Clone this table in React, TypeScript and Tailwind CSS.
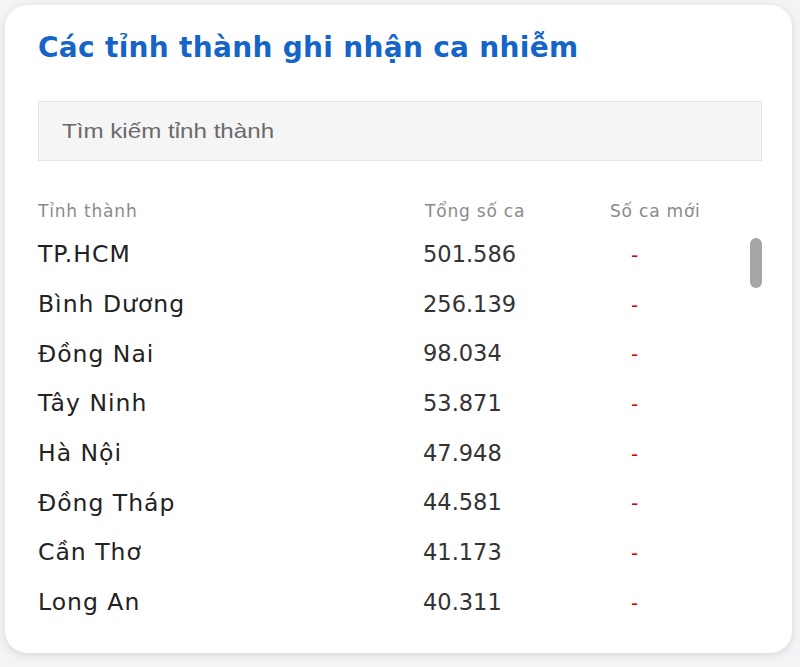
import React from 'react';

const rows = [
  { name: 'TP.HCM', total: '501.586' },
  { name: 'Bình Dương', total: '256.139' },
  { name: 'Đồng Nai', total: '98.034' },
  { name: 'Tây Ninh', total: '53.871' },
  { name: 'Hà Nội', total: '47.948' },
  { name: 'Đồng Tháp', total: '44.581' },
  { name: 'Cần Thơ', total: '41.173' },
  { name: 'Long An', total: '40.311' },
];

export default function App() {
  return (
    <div className="w-[800px] h-[667px] bg-[#f4f4f6] pt-[5px] pl-[5px] font-['DejaVu_Sans',sans-serif]">
      <div className="w-[787px] h-[648px] bg-white rounded-[22px] shadow-[0_2px_8px_rgba(0,0,0,0.12)] pl-[33px] pr-[30px] pt-[25px] overflow-hidden">
        <h2 className="text-[#1565c9] text-[28px] font-bold leading-[36px] tracking-[0.3px]">
          Các tỉnh thành ghi nhận ca nhiễm
        </h2>

        <div className="mt-[35px] w-[724px] h-[60px] bg-[#f5f5f5] border border-[#e4e4e4] flex items-center pl-[23px]">
          <span className="font-['Liberation_Sans',sans-serif] text-[21px] text-[#6a6a6a] scale-x-[1.15] origin-left">
            Tìm kiếm tỉnh thành
          </span>
        </div>

        <div className="mt-[38px] grid grid-cols-[387px_185px_1fr] text-[17px] tracking-[0.8px] text-[#8a8a8a] leading-[24px]">
          <span>Tỉnh thành</span>
          <span>Tổng số ca</span>
          <span>Số ca mới</span>
        </div>

        <div className="relative mt-[7px]">
          {rows.map((r) => (
            <div key={r.name} className="grid grid-cols-[385px_208px_1fr] h-[49.7px] items-center text-[#222]">
              <span className="text-[23.5px] tracking-[1px]">{r.name}</span>
              <span className="text-[22.5px] text-[#333]">{r.total}</span>
              <span className="text-[#d80000] text-[20px]">-</span>
            </div>
          ))}
          <div className="absolute right-[0px] top-[8px] w-[12px] h-[50px] rounded-full bg-[#a6a6a6]" />
        </div>
      </div>
    </div>
  );
}
